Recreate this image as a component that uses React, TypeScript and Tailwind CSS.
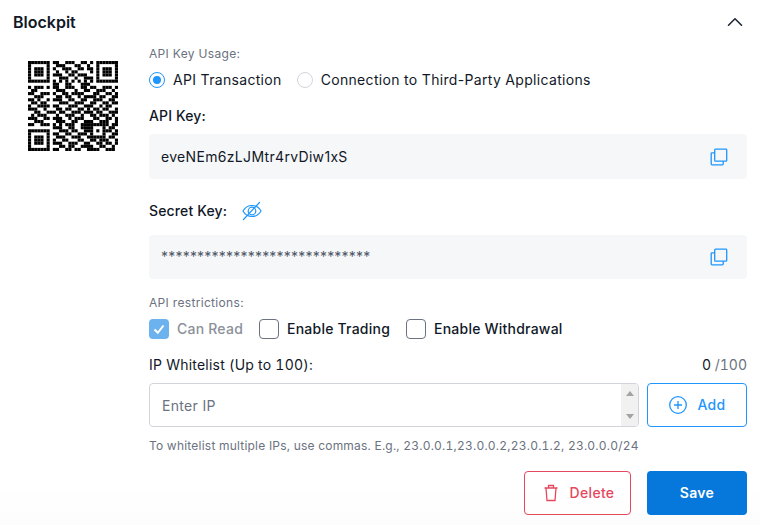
import React from 'react';
import { ChevronUp } from 'lucide-react';

const QR_ROWS = [
  '11111110110011100110101111111',
  '10000010011100011001001000001',
  '10111010100111001101101011101',
  '10111010010010110000101011101',
  '10111010111001101110001011101',
  '10000010001110010011101000001',
  '11111110101010101010101111111',
  '00000000110011000111000000000',
  '10111010110011100110110011101',
  '01100000011100010011001110010',
  '11001110100110111100011001101',
  '00111000011011001011110110011',
  '11010010111001100110011100110',
  '01101100001110011100110011011',
  '10011110110001110011100101100',
  '11100100011011001101011011001',
  '00110011101100111011101100111',
  '01011100010011100100110111010',
  '11100110111001011100011001101',
  '00111000011100110011100111001',
  '11001110101011100111111111011',
  '00000000111001100111100010110',
  '11111110001110110011101011101',
  '10000010110011001110100010011',
  '10111010011100111001111110110',
  '10111010100110001100110111001',
  '10111010111001110011001101101',
  '10000010001101100111100110010',
  '11111110110011011001111001110',
];

function QrCode() {
  return (
    <svg width="90" height="90" viewBox="0 0 29 29" className="block">
      {QR_ROWS.map((row, y) =>
        row.split('').map((cell, x) =>
          cell === '1' ? <rect key={`${x}-${y}`} x={x} y={y} width="1" height="1" fill="#000" /> : null
        )
      )}
    </svg>
  );
}

function CopyIcon() {
  return (
    <svg width="18" height="18" viewBox="0 0 18 18" fill="none" stroke="#1e96fc" strokeWidth="1.3">
      <rect x="4.700" y="1.200" width="12" height="12" rx="0.800" />
      <path d="M4.700 4.800H2a.8.8 0 0 0-.8.8v10.400c0 .5.4.8.8.8h10.400c.5 0 .8-.4.8-.8v-2.800" />
    </svg>
  );
}

function EyeOffIcon() {
  return (
    <svg width="20" height="20" viewBox="0 0 20 20" fill="none" stroke="#1e96fc" strokeWidth="1.2" strokeLinecap="round">
      <path d="M1 10c2-3.600 5.200-5.500 9-5.500s7 1.900 9 5.500c-2 3.600-5.200 5.500-9 5.500S3 13.600 1 10Z" />
      <circle cx="10" cy="10" r="3.800" />
      <path d="M17.500 1.500 1.500 18.500" />
    </svg>
  );
}

function Checkbox({ label, checked }: { label: string; checked?: boolean }) {
  return (
    <div className="flex items-center gap-2">
      {checked ? (
        <span className="flex h-5 w-5 items-center justify-center rounded bg-[#6cb2ef]">
          <svg width="14" height="14" viewBox="0 0 14 14" fill="none" stroke="#fff" strokeWidth="2">
            <path d="M2.500 7.500 5.800 10.800 11.500 3.500" />
          </svg>
        </span>
      ) : (
        <span className="h-5 w-5 rounded border border-[#6b7280] bg-white" />
      )}
      <span className={'text-sm font-medium tracking-[0.016em] ' + (checked ? 'text-[#8b9099]' : 'text-[#111827]')}>
        {label}
      </span>
    </div>
  );
}

export default function App() {
  return (
    <div className="h-[525px] w-[760px] bg-gradient-to-b from-white from-[93%] to-[#fcfcfc] font-['Inter',sans-serif] tracking-[0.02em] text-[#111827]">
      <div className="flex items-center justify-between pl-[13px] pr-[12px] pt-[12px]">
        <h2 className="text-base font-semibold leading-5 tracking-normal">Blockpit</h2>
        <ChevronUp size={26} strokeWidth={1.5} className="-my-1 text-[#1f2937]" />
      </div>

      <div className="flex pl-[28px] pr-[13px]">
        <div className="w-[121px] pt-[29px]">
          <QrCode />
        </div>

        <div className="flex-1 pt-[14px]">
          <p className="text-xs leading-4 text-[#6b7280]">API Key Usage:</p>
          <div className="mt-2 flex h-5 items-center text-sm">
            <span className="flex h-4 w-4 items-center justify-center rounded-full border border-[#1e96fc]">
              <span className="h-2 w-2 rounded-full bg-[#1e96fc]" />
            </span>
            <span className="ml-2">API Transaction</span>
            <span className="ml-[15px] h-4 w-4 rounded-full border border-[#d1d5db]" />
            <span className="ml-2">Connection to Third-Party Applications</span>
          </div>

          <p className="mt-[16px] text-sm font-medium leading-5 tracking-[0.01em]">API Key:</p>
          <div className="mt-2 flex h-[45px] items-center justify-between rounded bg-[#f6f7f9] pl-3 pr-[19px]">
            <span className="text-sm">eveNEm6zLJMtr4rvDiw1xS</span>
            <CopyIcon />
          </div>

          <div className="mt-[22px] flex h-5 items-center">
            <span className="text-sm font-medium tracking-[0.01em]">Secret Key:</span>
            <span className="ml-[15px]"><EyeOffIcon /></span>
          </div>
          <div className="mt-[14px] flex h-[44px] items-center justify-between rounded bg-[#f6f7f9] pl-3 pr-[19px]">
            <span className="text-sm tracking-[0.015em] text-[#4b5563]">*****************************</span>
            <CopyIcon />
          </div>

          <p className="mt-[16px] text-xs leading-4 text-[#6b7280]">API restrictions:</p>
          <div className="mt-2 flex gap-4">
            <Checkbox label="Can Read" checked />
            <Checkbox label="Enable Trading" />
            <Checkbox label="Enable Withdrawal" />
          </div>

          <div className="mt-[16px] flex items-center justify-between text-sm leading-5 tabular-nums">
            <span className="tracking-[0.016em]">IP Whitelist (Up to 100):</span>
            <span className="tracking-normal"><span>0</span> <span className="text-[#6b7280]">/100</span></span>
          </div>

          <div className="mt-2 flex gap-2">
            <div className="flex h-11 flex-1 overflow-hidden rounded border border-[#d1d5db]">
              <span className="flex flex-1 items-center pl-3 pt-px text-sm text-[#6b7280]">Enter IP</span>
              <div className="flex w-[17px] flex-col items-center justify-between bg-[#f1f1f1] py-[7px]">
                <svg width="8" height="5" viewBox="0 0 8 5" fill="#a3a3a3"><path d="M4 0 8 5H0Z" /></svg>
                <svg width="8" height="5" viewBox="0 0 8 5" fill="#a3a3a3"><path d="M4 5 0 0H8Z" /></svg>
              </div>
            </div>
            <button className="flex h-11 w-[100px] items-center justify-center gap-[9px] rounded border border-[#1e96fc] text-sm font-medium text-[#1e96fc]">
              <svg width="20" height="20" viewBox="0 0 20 20" fill="none" stroke="#1e96fc" strokeWidth="1.300">
                <circle cx="10" cy="10" r="8.300" />
                <path d="M10 6v8M6 10h8" />
              </svg>
              Add
            </button>
          </div>

          <p className="mt-[11px] text-xs leading-4 tracking-[0.018em] tabular-nums text-[#6b7280]">
            To whitelist multiple IPs, use commas. E.g., 23.0.0.1,23.0.0.2,23.0.1.2, 23.0.0.0/24
          </p>

          <div className="mt-[17px] flex justify-end gap-4">
            <button className="flex h-11 w-[107px] items-center justify-center gap-3 rounded border border-[#e5485d] pl-[3px] text-sm font-medium text-[#e5485d]">
              <svg width="14" height="18" viewBox="0 0 14 18" fill="none" stroke="#e5485d" strokeWidth="1.300">
                <path d="M.5 4h13M4.500 4V1.500h5V4M2 4l1 12.500h8L12 4" />
              </svg>
              Delete
            </button>
            <button className="h-11 w-[100px] rounded bg-[#0677db] text-sm font-semibold text-white">Save</button>
          </div>
        </div>
      </div>
    </div>
  );
}
